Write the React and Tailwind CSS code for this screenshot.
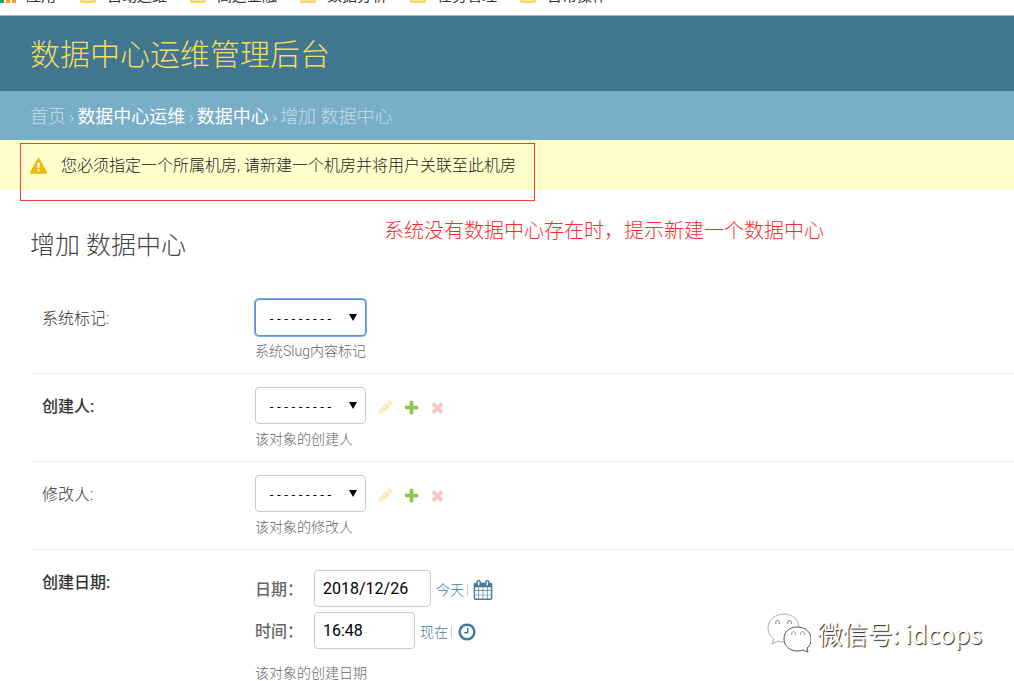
import React from "react";
import clsx from "clsx";

const bookmarks = ["自动运维", "高运金融", "数据分析", "任务管理", "日常操作"];

const icons = {
  warning:
    "M1024 1375v-190q0-14-9.5-23.5t-22.5-9.5h-192q-13 0-22.5 9.5t-9.5 23.5v190q0 14 9.5 23.5t22.5 9.5h192q13 0 22.5-9.5t9.5-23.5zm-2-374l18-459q0-12-10-19-13-11-24-11h-220q-11 0-24 11-10 7-10 21l17 457q0 10 10 16.5t24 6.5h185q14 0 23.5-6.5t10.5-16.5zm-14-934l768 1408q35 63-2 126-17 29-46.5 46t-63.5 17h-1536q-34 0-63.5-17t-46.5-46q-37-63-2-126l768-1408q17-31 47-49t65-18 65 18 47 49z",
  pencil:
    "M491 1536l91-91-235-235-91 91v107h128v128h107zm523-928q0-22-22-22-10 0-17 7l-542 542q-7 7-7 17 0 22 22 22 10 0 17-7l542-542q7-7 7-17zm-54-192l416 416-832 832h-416v-416zm683 96q0 53-37 90l-166 166-416-416 166-165q36-38 90-38 53 0 91 38l235 234q37 39 37 91z",
  plus:
    "M1600 796v192q0 40-28 68t-68 28h-416v416q0 40-28 68t-68 28h-192q-40 0-68-28t-28-68v-416h-416q-40 0-68-28t-28-68v-192q0-40 28-68t68-28h416v-416q0-40 28-68t68-28h192q40 0 68 28t28 68v416h416q40 0 68 28t28 68z",
  times:
    "M1490 1322q0 40-28 68l-136 136q-28 28-68 28t-68-28l-294-294-294 294q-28 28-68 28t-68-28l-136-136q-28-28-28-68t28-68l294-294-294-294q-28-28-28-68t28-68l136-136q28-28 68-28t68 28l294 294 294-294q28-28 68-28t68 28l136 136q28 28 28 68t-28 68l-294 294 294 294q28 28 28 68z",
  calendar:
    "M192 1664h288v-288h-288v288zm352 0h320v-288h-320v288zm-352-352h288v-320h-288v320zm352 0h320v-320h-320v320zm-352-384h288v-288h-288v288zm736 736h320v-288h-320v288zm-384-736h320v-288h-320v288zm768 736h288v-288h-288v288zm-384-352h320v-320h-320v320zm-352-864v-288q0-13-9.5-22.5t-22.5-9.5h-64q-13 0-22.5 9.5t-9.5 22.5v288q0 13 9.5 22.5t22.5 9.5h64q13 0 22.5-9.5t9.5-22.5zm736 864h288v-320h-288v320zm-384-384h320v-288h-320v288zm384 0h288v-288h-288v288zm32-480v-288q0-13-9.5-22.5t-22.5-9.5h-64q-13 0-22.5 9.5t-9.5 22.5v288q0 13 9.5 22.5t22.5 9.5h64q13 0 22.5-9.5t9.5-22.5zm384-64v1280q0 52-38 90t-90 38h-1408q-52 0-90-38t-38-90v-1280q0-52 38-90t90-38h128v-96q0-66 47-113t113-47h64q66 0 113 47t47 113v96h384v-96q0-66 47-113t113-47h64q66 0 113 47t47 113v96h128q52 0 90 38t38 90z",
  clock:
    "M1024 544v448q0 14-9 23t-23 9h-320q-14 0-23-9t-9-23v-64q0-14 9-23t23-9h224v-352q0-14 9-23t23-9h64q14 0 23 9t9 23zm416 352q0-148-73-273t-198-198-273-73-273 73-198 198-73 273 73 273 198 198 273 73 273-73 198-198 73-273zm224 0q0 209-103 385.5t-279.5 279.5-385.5 103-385.5-103-279.5-279.5-103-385.5 103-385.5 279.5-279.5 385.5-103 385.5 103 279.5 279.5 103 385.5z",
};

function Icon({ name, className }) {
  return (
    <svg viewBox="0 0 1792 1792" fill="currentColor" aria-hidden="true" className={className}>
      <path d={icons[name]} />
    </svg>
  );
}

// Only the lower edge of the bar shows above the page
function BookmarkBar() {
  return (
    <div className="flex h-4 items-end overflow-hidden border-b border-[#b2b2b2] bg-white pb-[11px] text-[15px] leading-4 text-[#333]">
      <div className="flex w-20 shrink-0 items-end gap-2">
        <svg viewBox="0 0 18 18" aria-hidden="true" className="mb-px h-[18px] w-[18px]">
          <path d="M0 0h4v5H0zM0 7h4v4H0zM0 13h4v5H0z" fill="#1da462" />
          <path d="M6 0h4v5H6zM6 7h4v4H6zM6 13h4v5H6z" fill="#f9a11b" />
          <path d="M12 0h4v5h-4zM12 7h4v4h-4zM12 13h4v5h-4z" fill="#f9a11b" />
        </svg>
        <span>应用</span>
      </div>
      {bookmarks.map((name) => (
        <div key={name} className="flex w-[110px] shrink-0 items-end gap-[11px]">
          <svg viewBox="0 0 16 14" aria-hidden="true" className="mb-px h-[14px] w-4">
            <path d="M1 0h6l2 2h7v10q0 2-2 2H2q-2 0-2-2V1z" fill="#fbd75f" />
            <path d="M2 4h11v8H2z" fill="#fee998" />
          </svg>
          <span>{name}</span>
        </div>
      ))}
    </div>
  );
}

function Select({ id, focused }) {
  return (
    <div className="relative w-[111px]">
      <select
        id={id}
        className={clsx(
          "block h-[37px] w-full appearance-none rounded-[4px] border bg-white pt-[2px] pl-3 font-['DejaVu_Sans_Mono',monospace] text-xs text-black outline-none",
          focused ? "border-[#5b8fdc] ring-1 ring-[#7eaaf0]" : "border-[#ccc]"
        )}
      >
        <option>---------</option>
      </select>
      <svg
        viewBox="0 0 8 7"
        aria-hidden="true"
        className="pointer-events-none absolute top-[15px] right-[9px] h-[7px] w-2"
      >
        <path d="M0 0h8L4 7z" fill="#000" />
      </svg>
    </div>
  );
}

function RelatedActions() {
  return (
    <div className="flex items-center gap-[9px] pt-[3px]">
      <button type="button" aria-label="修改" className="text-[#fbe7b4]">
        <Icon name="pencil" className="h-4 w-4" />
      </button>
      <button type="button" aria-label="增加" className="text-[#83cb4c]">
        <Icon name="plus" className="h-[17px] w-[17px]" />
      </button>
      <button type="button" aria-label="删除" className="text-[#f5c6c6]">
        <Icon name="times" className="h-[17px] w-[17px]" />
      </button>
    </div>
  );
}

function SelectRow({ id, label, help, required, focused, related }) {
  return (
    <div className="flex border-b border-[#eee] px-3 pt-[13px] pb-3">
      <label
        htmlFor={id}
        className={clsx(
          "w-[213px] shrink-0 pt-2 text-base leading-6",
          required ? "font-medium text-[#333]" : "font-light text-[#333]"
        )}
      >
        {label}
      </label>
      <div>
        <div className="flex items-center gap-3">
          <Select id={id} focused={focused} />
          {related && <RelatedActions />}
        </div>
        <p className="pt-[5px] text-sm leading-5 font-light text-[#666]">{help}</p>
      </div>
    </div>
  );
}

function DateTimeLine({ id, label, value, shortcut, icon, iconLabel, inputClass }) {
  return (
    <div className="flex items-center">
      <label htmlFor={id} className="w-[59px] pt-[2px] text-base leading-6 font-medium text-[#666]">
        {label}
      </label>
      <input
        id={id}
        type="text"
        defaultValue={value}
        className={clsx(
          "h-[37px] rounded-[4px] border border-[#ccc] bg-white px-2 font-[Roboto,sans-serif] text-base text-black outline-none",
          inputClass
        )}
      />
      <div className="flex items-center gap-[3px] pt-[3px] pl-[5px] text-sm leading-5 font-light text-[#447e9b]">
        <a href="#">{shortcut}</a>
        <span className="h-3 w-px bg-[#ccc]" />
        <button type="button" aria-label={iconLabel} className="pl-[2px]">
          <Icon name={icon} className="h-5 w-5" />
        </button>
      </div>
    </div>
  );
}

function Watermark() {
  return (
    <div className="pointer-events-none absolute top-[613px] right-8 flex items-center gap-[7px]">
      <svg viewBox="0 0 44 40" fill="#fff" aria-hidden="true" className="h-10 w-11">
        <path
          d="M17 1C8 1 1 7 1 15c0 5 2 8 6 11l-2 5 6-3c2 1 4 1 7 1 8 0 14-6 14-14S26 1 17 1z"
          stroke="#999"
          strokeWidth="0.8"
        />
        <path
          d="M30 14c-8 0-13 5-13 12s6 12 13 12c2 0 4 0 6-1l5 2-1-4c3-2 4-5 4-9 0-7-6-12-14-12z"
          stroke="#555"
          strokeWidth="1"
        />
        <path d="M9 11a2 2 0 1 1 3 0M21 11a2 2 0 1 1 3 0" fill="none" stroke="#666" strokeWidth="0.9" />
        <path d="M25 22a2 2 0 1 1 3 0M34 22a2 2 0 1 1 3 0" fill="none" stroke="#888" strokeWidth="0.9" />
      </svg>
      <span className="font-['Noto_Sans_CJK_SC',sans-serif] text-[25px] leading-9 text-white [text-shadow:1px_1px_1px_#222]">
        微信号: idcops
      </span>
    </div>
  );
}

export default function App() {
  return (
    <div className="relative min-h-screen overflow-hidden bg-white font-[Roboto,'Noto_Sans_CJK_SC',sans-serif]">
      <BookmarkBar />

      <header className="bg-[#417690] px-[30px] pt-[21px] pb-[18px]">
        <h1 className="text-[30px] leading-9 font-light text-[#f5dd5d]">数据中心运维管理后台</h1>
      </header>

      {/* Breadcrumbs */}
      <nav className="flex gap-[3px] bg-[#79aec8] px-[30px] pt-[14px] pb-[11px] text-lg leading-6 font-light text-[#c4dce8]">
        <a href="#">首页</a>
        <span>›</span>
        <a href="#" className="font-normal text-white">数据中心运维</a>
        <span>›</span>
        <a href="#" className="font-normal text-white">数据中心</a>
        <span>›</span>
        <span>增加 数据中心</span>
      </nav>

      {/* Warning message */}
      <div className="relative flex items-center gap-[14px] bg-[#ffc] px-[30px] pt-[14px] pb-3 text-base leading-6 font-light text-[#222]">
        <Icon name="warning" className="h-[17px] w-[17px] text-[#efb80b]" />
        <p>您必须指定一个所属机房, 请新建一个机房并将用户关联至此机房</p>
        <div className="pointer-events-none absolute top-[3px] left-5 h-[58px] w-[515px] border border-[#f93a3a]" />
      </div>

      <main className="pl-[30px]">
        <div className="flex gap-[198px] pt-6">
          <h2 className="pt-4 text-[25px] leading-8 font-light text-[#444]">增加 数据中心</h2>
          <p className="pt-[3px] text-xl leading-7 font-light text-[#fb2a2a]">
            系统没有数据中心存在时，提示新建一个数据中心
          </p>
        </div>

        <form className="pt-6">
          <SelectRow id="slug" label="系统标记:" help="系统Slug内容标记" focused />
          <SelectRow id="creator" label="创建人:" help="该对象的创建人" required related />
          <SelectRow id="modifier" label="修改人:" help="该对象的修改人" related />

          <div className="flex px-3 pt-5">
            <div className="w-[213px] shrink-0 pt-px text-base leading-6 font-medium text-[#333]">创建日期:</div>
            <div>
              <div className="flex flex-col gap-[5px]">
                <DateTimeLine
                  id="date"
                  label="日期："
                  value="2018/12/26"
                  shortcut="今天"
                  icon="calendar"
                  iconLabel="选择日期"
                  inputClass="w-[117px]"
                />
                <DateTimeLine
                  id="time"
                  label="时间："
                  value="16:48"
                  shortcut="现在"
                  icon="clock"
                  iconLabel="选择时间"
                  inputClass="w-[101px]"
                />
              </div>
              <p className="pt-4 text-sm leading-4 font-light text-[#666]">该对象的创建日期</p>
            </div>
          </div>
        </form>
      </main>

      <Watermark />
    </div>
  );
}
